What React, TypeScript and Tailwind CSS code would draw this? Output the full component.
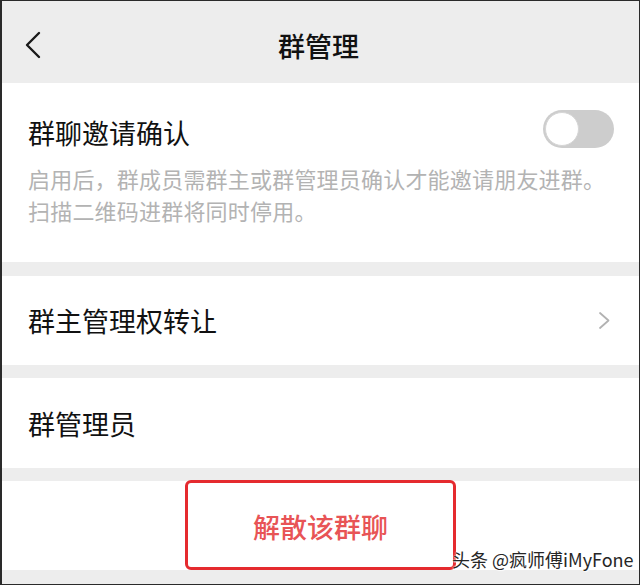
import React from "react";

const font = { fontFamily: '"Noto Sans CJK SC", "Noto Sans", sans-serif' };

export default function App() {
  return (
    <div className="w-[640px] h-[587px] bg-white relative" style={font}>
      <div className="h-[585px] border-l-2 border-r border-t border-b border-[#2a2a2a] overflow-hidden flex flex-col bg-[#ededed]">
        {/* Header */}
        <div className="h-[82px] shrink-0 grid grid-cols-[1fr_auto_1fr] items-center bg-[#ededed]">
          <div className="pl-[22px] pt-[6px]">
            <svg width="17" height="28" viewBox="0 0 17 28" fill="none">
              <path d="M15 2 L3 14 L15 26" stroke="#1a1a1a" strokeWidth="2.4" strokeLinecap="round" strokeLinejoin="round" />
            </svg>
          </div>
          <div className="text-[27px] font-medium text-[#111] pt-[6px] leading-none -ml-[4px]">群管理</div>
          <div />
        </div>

        {/* Section 1 */}
        <div className="h-[179px] shrink-0 bg-white pl-[26px] pr-[25px] pt-[27px]">
          <div className="flex items-center justify-between h-[38px]">
            <span className="text-[27px] leading-none text-[#111] pt-[6px]">群聊邀请确认</span>
            <div className="w-[71px] h-[38px] rounded-full bg-[#cdcdcd] p-[2px] flex items-center">
              <div className="w-[34px] h-[34px] rounded-full bg-white border border-[#d6d6d6]" />
            </div>
          </div>
          <div className="mt-[14px] text-[22px] leading-[32px] text-[#b3b3b3] tracking-[0.2px]">
            <div>启用后，群成员需群主或群管理员确认才能邀请朋友进群。</div>
            <div>扫描二维码进群将同时停用。</div>
          </div>
        </div>

        <div className="h-[14px] shrink-0" />

        {/* Row 2 */}
        <div className="h-[89px] shrink-0 bg-white pl-[26px] pr-[28px] flex items-center justify-between">
          <span className="text-[27px] leading-none text-[#111]">群主管理权转让</span>
          <svg width="13" height="19" viewBox="0 0 13 19" fill="none">
            <path d="M2 2 L10.5 9.5 L2 17" stroke="#b2b2b2" strokeWidth="1.8" strokeLinecap="round" strokeLinejoin="round" />
          </svg>
        </div>

        <div className="h-[13px] shrink-0" />

        {/* Row 3 */}
        <div className="h-[90px] shrink-0 bg-white pl-[26px] flex items-center">
          <span className="text-[27px] leading-none text-[#111]">群管理员</span>
        </div>

        <div className="h-[13px] shrink-0" />

        {/* Row 4 */}
        <div className="h-[89px] shrink-0 bg-white flex justify-center relative">
          <div className="w-[271px] h-[90px] -mt-[1px] border-[3px] border-[#e52a2f] rounded-[6px] flex items-center justify-center">
            <span className="text-[27px] leading-none font-medium text-[#e85456] pt-[2px]">解散该群聊</span>
          </div>
        </div>

        <div className="flex-1 bg-[#ededed]" />
      </div>

      {/* watermark */}
      <div
        className="absolute left-[452px] top-[550px] text-[18px] leading-none text-[#262626] whitespace-nowrap"
        style={{ textShadow: "0 0 2px #fff, 0 0 2px #fff, 1px 1px 1px rgba(255,255,255,0.9)" }}
      >
        头条 @疯师傅iMyFone
      </div>
    </div>
  );
}
